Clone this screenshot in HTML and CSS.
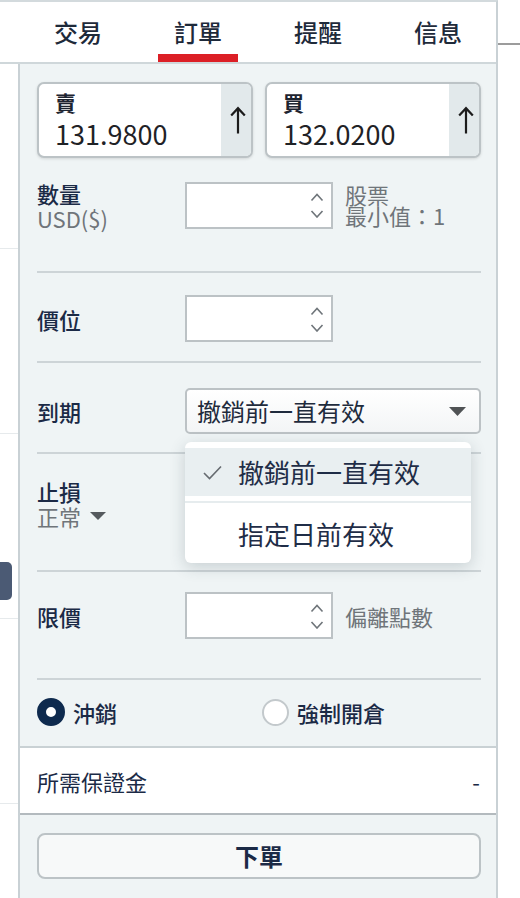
FILE: index.html
```html
<!DOCTYPE html>
<html lang="zh-Hant">
<head>
<meta charset="utf-8">
<title>訂單</title>
<link rel="stylesheet" href="styles.css">
</head>
<body>
<div class="app">
  <nav class="tabs">
    <div class="tab">交易</div>
    <div class="tab active">訂單</div>
    <div class="tab">提醒</div>
    <div class="tab">信息</div>
  </nav>
  <div class="content">
    <div class="strip">
      <div class="strip-row"></div>
      <div class="strip-row"></div>
      <div class="strip-row has-handle"><div class="strip-handle"></div></div>
      <div class="strip-row"></div>
    </div>
    <div class="panel">
      <div class="form">
        <div class="quotes">
          <div class="quote">
            <div class="quote-main">
              <div class="quote-label">賣</div>
              <div class="quote-price">131.9800</div>
            </div>
            <div class="quote-side">
              <svg class="arrow" width="18" height="28" viewBox="0 0 18 28"><path d="M9 27.5V2.5M2.2 9.6L9 2.2l6.8 7.4" fill="none" stroke="#1c1c1c" stroke-width="2.2"/></svg>
            </div>
          </div>
          <div class="quote">
            <div class="quote-main">
              <div class="quote-label">買</div>
              <div class="quote-price">132.0200</div>
            </div>
            <div class="quote-side">
              <svg class="arrow" width="18" height="28" viewBox="0 0 18 28"><path d="M9 27.5V2.5M2.2 9.6L9 2.2l6.8 7.4" fill="none" stroke="#1c1c1c" stroke-width="2.2"/></svg>
            </div>
          </div>
        </div>

        <div class="row row-qty">
          <div class="label">
            <div class="label-main">數量</div>
            <div class="label-sub">USD($)</div>
          </div>
          <div class="stepper">
            <svg width="14" height="26" viewBox="0 0 14 26"><path d="M1.5 8.5L7 2.5l5.5 6M1.5 19L7 25l5.5-6" fill="none" stroke="#6f757a" stroke-width="1.6"/></svg>
          </div>
          <div class="hint">股票<br>最小值：1</div>
        </div>

        <div class="row row-price">
          <div class="label"><div class="label-main">價位</div></div>
          <div class="stepper">
            <svg width="14" height="26" viewBox="0 0 14 26"><path d="M1.5 8.5L7 2.5l5.5 6M1.5 19L7 25l5.5-6" fill="none" stroke="#6f757a" stroke-width="1.6"/></svg>
          </div>
        </div>

        <div class="row row-exp">
          <div class="label"><div class="label-main">到期</div></div>
          <div class="select">
            <span>撤銷前一直有效</span>
            <svg width="17" height="9" viewBox="0 0 17 9"><path d="M0 0h17L8.5 9z" fill="#505355"/></svg>
            <div class="menu">
              <div class="menu-item selected">
                <span class="check"><svg width="19" height="15" viewBox="0 0 19 15"><path d="M1 8l5.5 5.5L18 1.5" fill="none" stroke="#666b70" stroke-width="1.6"/></svg></span>
                撤銷前一直有效
              </div>
              <div class="menu-sep"></div>
              <div class="menu-item second">
                <span class="check"></span>
                指定日前有效
              </div>
            </div>
          </div>
        </div>

        <div class="row row-stop">
          <div class="label">
            <div class="label-main">止損</div>
            <div class="label-sub">正常<svg class="caret" width="16" height="8" viewBox="0 0 16 8"><path d="M0 0h16L8 8z" fill="#555a5e"/></svg></div>
          </div>
          <div class="stepper">
            <svg width="14" height="26" viewBox="0 0 14 26"><path d="M1.5 8.5L7 2.5l5.5 6M1.5 19L7 25l5.5-6" fill="none" stroke="#6f757a" stroke-width="1.6"/></svg>
          </div>
        </div>

        <div class="row row-limit">
          <div class="label"><div class="label-main">限價</div></div>
          <div class="stepper">
            <svg width="14" height="26" viewBox="0 0 14 26"><path d="M1.5 8.5L7 2.5l5.5 6M1.5 19L7 25l5.5-6" fill="none" stroke="#6f757a" stroke-width="1.6"/></svg>
          </div>
          <div class="hint single">偏離點數</div>
        </div>

        <div class="row row-radio">
          <div class="opt"><span class="radio on"></span>沖銷</div>
          <div class="opt"><span class="radio off"></span>強制開倉</div>
        </div>
      </div>

      <div class="margin-row">
        <span>所需保證金</span>
        <span>-</span>
      </div>

      <div class="actions">
        <div class="btn">下單</div>
      </div>
    </div>
  </div>
</div>
<div class="aside"><div class="aside-line"></div></div>
</body>
</html>
```

FILE: styles.css
```css
* { box-sizing: border-box; }

html, body {
  margin: 0;
  padding: 0;
}

body {
  width: 520px;
  height: 898px;
  overflow: hidden;
  display: flex;
  background: #ffffff;
  font-family: "Noto Sans CJK TC", "Noto Sans", sans-serif;
  color: #1b2a46;
}

.app {
  width: 498px;
  height: 898px;
  flex: none;
  display: flex;
  flex-direction: column;
  border-top: 2px solid #d3dadd;
  border-right: 2px solid #c9d1d5;
}

.aside {
  flex: 1;
  padding-top: 43px;
}

.aside-line {
  height: 2px;
  background: #9c9c9c;
}

/* Tabs */
.tabs {
  height: 62px;
  flex: none;
  display: flex;
  gap: 40px;
  padding-left: 38px;
  border-bottom: 2px solid #cfd7da;
  background: #fff;
}

.tab {
  padding: 8px 16px 0;
  border-bottom: 8px solid transparent;
  font-size: 24px;
  line-height: 44px;
  font-weight: 500;
  color: #1e2a3a;
}

.tab.active {
  border-bottom-color: #dc1f26;
}

/* Content */
.content {
  flex: 1;
  display: flex;
  min-height: 0;
}

.strip {
  width: 18px;
  flex: none;
}

.strip-row {
  height: 185px;
  border-bottom: 1px solid #e6eaec;
}

.strip-row.has-handle {
  padding-top: 128px;
}

.strip-handle {
  width: 12px;
  height: 38px;
  background: #4b5a74;
  border-radius: 0 5px 5px 0;
}

.panel {
  flex: 1;
  display: flex;
  flex-direction: column;
  border-left: 2px solid #c9d1d5;
  background: #eff4f5;
}

.form {
  padding: 0 15px 0 17px;
}

/* Quotes */
.quotes {
  display: grid;
  grid-template-columns: 1fr 1fr;
  gap: 12px;
  padding-top: 18px;
}

.quote {
  height: 76px;
  display: flex;
  overflow: hidden;
  background: #fff;
  border: 2px solid #bcc3c6;
  border-radius: 7px;
  box-shadow: 0 1px 3px rgba(0, 0, 0, 0.12);
}

.quote-main {
  flex: 1;
  padding: 6px 0 0 16px;
}

.quote-label {
  font-size: 21px;
  line-height: 24px;
  font-weight: 700;
  color: #1d2430;
}

.quote-price {
  font-size: 27px;
  line-height: 40px;
  color: #1f2226;
}

.quote-side {
  width: 30px;
  flex: none;
  display: flex;
  align-items: center;
  justify-content: center;
  padding-left: 3px;
  background: #e2e9eb;
}

/* Rows */
.row {
  display: flex;
  align-items: center;
  border-bottom: 2px solid #cdd4d7;
}

.row-qty { padding: 22px 0 41px; }
.row-price { padding: 22px 0 19px; }
.row-exp { padding: 25px 0 18px; }
.row-stop { padding: 24px 0 42px; }
.row-limit { padding: 20px 0 39px; }

.label {
  width: 148px;
  flex: none;
}

.label-main {
  font-size: 22px;
  line-height: 26px;
  font-weight: 500;
  color: #1b2a46;
}

.label-sub {
  display: flex;
  align-items: center;
  height: 24px;
  font-size: 22px;
  line-height: 24px;
  color: #6f757a;
}

.caret {
  margin-left: 9px;
}

.stepper {
  width: 148px;
  height: 47px;
  flex: none;
  display: flex;
  align-items: center;
  justify-content: flex-end;
  padding-right: 7px;
  background: #fff;
  border: 2px solid #bcc2c5;
}

.hint {
  margin-left: 12px;
  font-size: 22px;
  line-height: 21px;
  color: #6f757a;
}

.hint.single {
  line-height: 26px;
}

/* Select + menu */
.select {
  position: relative;
  width: 296px;
  height: 46px;
  flex: none;
  display: flex;
  align-items: center;
  justify-content: space-between;
  padding: 0 13px 0 10px;
  border: 2px solid #bcc2c5;
  border-radius: 5px;
  background: linear-gradient(#ffffff, #f3f5f6);
  font-size: 24px;
  line-height: 30px;
  color: #1f2b3d;
}

.menu {
  position: absolute;
  top: calc(100% + 10px);
  left: -2px;
  width: 286px;
  padding: 6px 0;
  background: #fff;
  border-radius: 6px;
  box-shadow: 0 4px 16px rgba(40, 60, 70, 0.2);
  z-index: 5;
}

.menu-item {
  height: 48px;
  display: flex;
  align-items: center;
  padding-left: 18px;
  font-size: 26px;
  line-height: 30px;
  color: #1f2d47;
}

.menu-item.selected {
  background: #e9eff1;
}

.menu-item.second {
  height: 54px;
  padding-top: 8px;
}

.check {
  width: 35px;
  flex: none;
  display: flex;
  align-items: center;
}

.menu-sep {
  height: 2px;
  margin-top: 5px;
  background: #e6ecee;
}

/* Radios */
.row-radio {
  display: grid;
  grid-template-columns: 1fr 1fr;
  column-gap: 6px;
  padding: 18px 0 20px;
  border-bottom: none;
}

.opt {
  display: flex;
  align-items: center;
  gap: 8px;
  height: 28px;
  font-size: 22px;
  line-height: 28px;
  font-weight: 500;
  color: #1b2a46;
}

.radio {
  width: 28px;
  height: 28px;
  flex: none;
  border-radius: 50%;
  background: #fff;
}

.radio.on {
  border: 9px solid #0e2a4e;
}

.radio.off {
  width: 27px;
  height: 27px;
  border: 2px solid #c3c9cc;
}

/* Margin row */
.margin-row {
  height: 69px;
  display: flex;
  align-items: center;
  justify-content: space-between;
  padding: 0 16px 0 17px;
  background: #fff;
  border-top: 2px solid #c9d1d4;
  border-bottom: 2px solid #b3babe;
  font-size: 22px;
  line-height: 28px;
  color: #1b2a46;
}

/* Actions */
.actions {
  padding: 18px 15px 0 17px;
}

.btn {
  height: 46px;
  display: flex;
  align-items: center;
  justify-content: center;
  background: #f7f9f9;
  border: 2px solid #bcc3c6;
  border-radius: 8px;
  font-size: 24px;
  line-height: 30px;
  font-weight: 700;
  color: #1b2a46;
}
```
